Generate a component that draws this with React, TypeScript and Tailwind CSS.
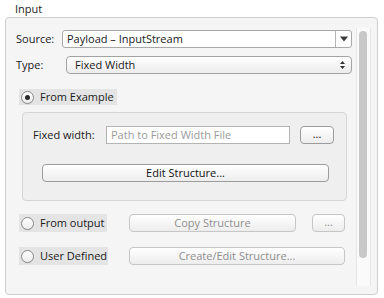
import React from "react";

function Radio({ checked }: { checked?: boolean }) {
  return (
    <div className="w-[13px] h-[13px] rounded-full border border-[#8a8a8a] bg-gradient-to-b from-white to-[#ececec] flex items-center justify-center shadow-[0_1px_0_rgba(0,0,0,0.05)]">
      {checked && <div className="w-[5px] h-[5px] rounded-full bg-[#2a2a2a]" />}
    </div>
  );
}

function Btn({ children, w, disabled, cls = "" }: { children: React.ReactNode; w: string; disabled?: boolean; cls?: string }) {
  return (
    <div
      className={`${w} h-[18px] rounded-[4px] border flex items-center justify-center bg-gradient-to-b from-white to-[#ededed] ${
        disabled ? "border-[#c6c6c6] text-[#8e8e8e]" : "border-[#9c9c9c] text-[#111]"
      } ${cls}`}
    >
      {children}
    </div>
  );
}

export default function App() {
  return (
    <div className="w-[384px] h-[298px] bg-white font-['Open_Sans',sans-serif] text-[11px] text-[#1a1a1a] leading-[14px]">
      <div className="pt-[2px] pl-[15px] h-[16px] text-[#222]">Input</div>
      <div className="ml-[5px] mt-[1px] w-[373px] h-[278px] rounded-[4px] border border-[#cdcdcd] bg-[#f5f5f5] flex">
        <div className="w-[350px] flex flex-col">
          {/* Source */}
          <div className="mt-[12px] h-[18px] pl-[10px] flex items-center">
            <div className="w-[46px]">Source:</div>
            <div className="w-[290px] h-[18px] bg-white border border-[#a9a9a9] rounded-[3px] flex items-center">
              <div className="flex-1 pl-[4px]">Payload – InputStream</div>
              <div className="w-[16px] h-full border-l border-[#b5b5b5] flex items-center justify-center">
                <svg width="8" height="6" viewBox="0 0 8 6">
                  <path d="M0 0.5 H8 L4 5.5 Z" fill="#3a3a3a" />
                </svg>
              </div>
            </div>
          </div>
          {/* Type */}
          <div className="mt-[8px] h-[18px] pl-[10px] flex items-center">
            <div className="w-[50px]">Type:</div>
            <div className="w-[286px] h-[18px] rounded-[4px] border border-[#a3a3a3] bg-gradient-to-b from-white to-[#ececec] flex items-center">
              <div className="flex-1 pl-[8px]">Fixed Width</div>
              <div className="w-[14px] flex flex-col items-center gap-[2px] mr-[2px]">
                <svg width="5" height="3" viewBox="0 0 5 3">
                  <path d="M0 3 H5 L2.5 0 Z" fill="#333" />
                </svg>
                <svg width="5" height="3" viewBox="0 0 5 3">
                  <path d="M0 0 H5 L2.5 3 Z" fill="#333" />
                </svg>
              </div>
            </div>
          </div>
          {/* From Example */}
          <div className="mt-[15px] ml-[13px] w-[98px] h-[16px] bg-[#e4e4e4] flex items-center pl-[2px] gap-[6px]">
            <Radio checked />
            <span>From Example</span>
          </div>
          {/* Inner box */}
          <div className="mt-[7px] ml-[16px] w-[325px] h-[89px] rounded-[4px] border border-[#d6d6d6] bg-[#efefef] flex flex-col">
            <div className="mt-[13px] h-[18px] flex items-start">
              <div className="ml-[10px] w-[73px] h-[18px] flex items-center">Fixed width:</div>
              <div className="w-[184px] h-[18px] bg-white border border-[#b4b4b4] flex items-center pl-[4px] text-[#9a9a9a]">
                Path to Fixed Width File
              </div>
              <Btn w="w-[34px]" cls="ml-[10px] h-[17px]">
                <span className="-mt-[3px]">...</span>
              </Btn>
            </div>
            <Btn w="w-[287px]" cls="mt-[20px] ml-[19px]">
              Edit Structure...
            </Btn>
          </div>
          {/* From output */}
          <div className="mt-[13px] h-[18px] flex items-center">
            <div className="ml-[13px] w-[88px] h-[18px] bg-[#e4e4e4] flex items-center pl-[2px] gap-[6px]">
              <Radio />
              <span>From output</span>
            </div>
            <Btn w="w-[167px]" disabled cls="ml-[22px] h-[17px]">
              Copy Structure
            </Btn>
            <Btn w="w-[33px]" disabled cls="ml-[16px] h-[17px]">
              <span className="-mt-[3px]">...</span>
            </Btn>
          </div>
          {/* User Defined */}
          <div className="mt-[15px] h-[18px] flex items-center">
            <div className="ml-[13px] w-[89px] h-[18px] bg-[#e4e4e4] flex items-center pl-[2px] gap-[6px]">
              <Radio />
              <span>User Defined</span>
            </div>
            <Btn w="w-[216px]" disabled cls="ml-[21px] h-[17px]">
              Create/Edit Structure...
            </Btn>
          </div>
        </div>
        {/* Scrollbar */}
        <div className="mt-[10px] w-[15px] h-[258px] border-l border-r border-[#e6e6e6] bg-[#fafafa]">
          <div className="mt-[3px] ml-[2px] w-[8px] h-[227px] rounded-full bg-[#c8c8c8]" />
        </div>
      </div>
    </div>
  );
}
